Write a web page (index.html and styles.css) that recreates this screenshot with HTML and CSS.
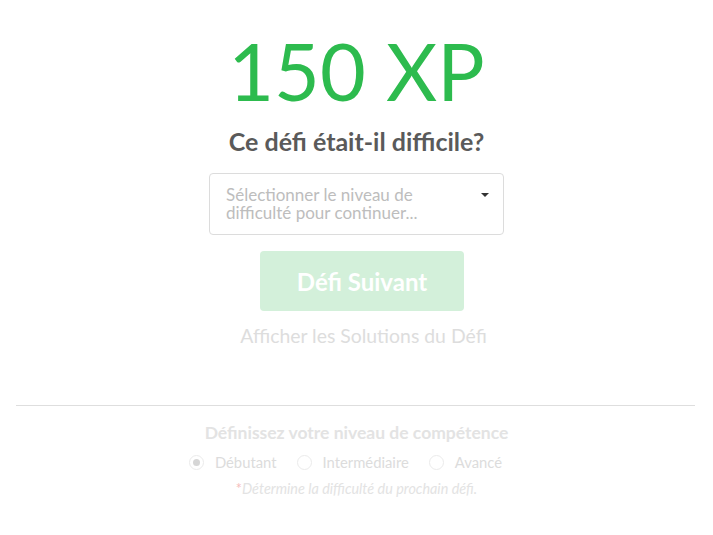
FILE: index.html
```html
<!DOCTYPE html>
<html lang="fr">
<head>
<meta charset="utf-8">
<link rel="stylesheet" href="styles.css">
</head>
<body>
<main class="page">
  <section class="result">
    <h1 class="xp">150 XP</h1>
    <h2 class="question">Ce défi était-il difficile?</h2>
    <div class="select">
      <span class="placeholder">Sélectionner le niveau de difficulté pour continuer...</span>
      <span class="caret"></span>
    </div>
    <button class="next" disabled>Défi Suivant</button>
    <a class="solutions">Afficher les Solutions du Défi</a>
  </section>
  <hr class="divider">
  <section class="skill">
    <h3 class="skill-title">Définissez votre niveau de compétence</h3>
    <div class="radios">
      <label class="radio"><span class="dot checked"></span>Débutant</label>
      <label class="radio"><span class="dot"></span>Intermédiaire</label>
      <label class="radio"><span class="dot"></span>Avancé</label>
    </div>
    <p class="note"><span class="star">*</span>Détermine la difficulté du prochain défi.</p>
  </section>
</main>
</body>
</html>
```
FILE: styles.css
```css
* { box-sizing: border-box; }
html, body { margin: 0; padding: 0; background: #fff; }
body { font-family: Lato, "Open Sans", sans-serif; }
.page { width: 713px; padding: 0 16px 0 16px; }
.result { display: flex; flex-direction: column; align-items: center; }
.xp {
  margin: 23px 0 0;
  font-size: 79px;
  line-height: 96px;
  font-weight: 400;
  color: #2dbb4e;
}
.question {
  margin: 8px 0 0;
  font-size: 25px;
  line-height: 29px;
  font-weight: 700;
  color: #5a5a5a;
}
.select {
  margin-top: 17px;
  width: 295px;
  height: 62px;
  border: 1px solid #dcdcdc;
  border-radius: 4px;
  display: flex;
  align-items: flex-start;
  padding: 12px 14px 0 16px;
  position: relative;
}
.placeholder {
  width: 240px;
  font-size: 17px;
  line-height: 18px;
  color: #bdbdbd;
}
.caret {
  position: absolute;
  right: 14px;
  top: 19px;
  width: 0; height: 0;
  border-left: 4px solid transparent;
  border-right: 4px solid transparent;
  border-top: 4px solid #333;
}
.next {
  margin: 16px 0 0 11px;
  width: 204px;
  height: 60px;
  border: 0;
  border-radius: 4px;
  background: #d3f0da;
  color: #fff;
  font-family: inherit;
  font-size: 24px;
  font-weight: 700;
}
.solutions {
  margin: 13px 0 0 14px;
  font-size: 19.4px;
  line-height: 24px;
  color: #dddddd;
}
.divider {
  margin: 57px 2px 0 0;
  border: 0;
  border-top: 1px solid #dedede;
}
.skill { display: flex; flex-direction: column; align-items: center; }
.skill-title {
  margin: 16px 0 0;
  font-size: 17.5px;
  line-height: 22px;
  font-weight: 700;
  color: #e3e3e3;
}
.radios { display: flex; gap: 20px; margin: 8px 0 0 -22px; }
.radio {
  display: flex; align-items: center; gap: 11px;
  font-size: 14.8px; line-height: 20px; color: #dcdcdc;
}
.dot {
  width: 15px; height: 15px;
  border: 1px solid #ebebeb;
  border-radius: 50%;
  display: inline-flex; align-items: center; justify-content: center;
}
.dot.checked::after {
  content: ""; width: 7px; height: 7px; border-radius: 50%; background: #d6d6d6;
}
.note {
  margin: 8px 0 0;
  font-size: 14.4px;
  line-height: 18px;
  font-style: italic;
  color: #e3e3e3;
}
.star { color: #f6bcbc; font-style: normal; }
```
